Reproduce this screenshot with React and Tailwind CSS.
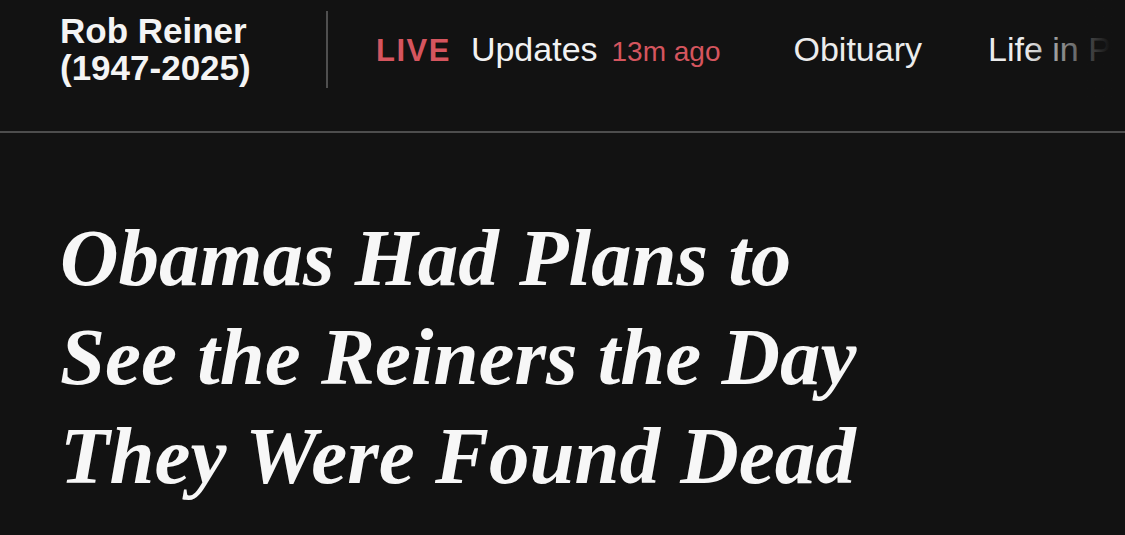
import React from "react";

const sans = { fontFamily: '"Liberation Sans", Arial, sans-serif' };

function TopBar() {
  return (
    <div className="relative h-[133px] overflow-hidden border-b-2 border-[#4d4d4d]">
      <div className="flex h-[98px] items-center pl-[60px]">
        <div
          className="w-[266px] shrink-0 text-[35px] font-bold leading-[37px] text-[#f4f4f4]"
          style={sans}
        >
          <div>Rob Reiner</div>
          <div>(1947-2025)</div>
        </div>
        <div className="h-[77px] w-[2px] shrink-0 bg-[#4f4f4f]" />
        <div className="ml-[48px] flex shrink-0 items-baseline whitespace-nowrap" style={sans}>
          <span className="text-[31px] font-bold leading-none tracking-[1.5px] text-[#d5555e]">
            LIVE
          </span>
          <span className="ml-[20px] text-[34px] leading-none text-[#f2f2f2]">Updates</span>
          <span className="ml-[14px] text-[28px] leading-none text-[#d5555e]">13m ago</span>
          <span className="ml-[73px] text-[34px] leading-none text-[#ececec]">Obituary</span>
          <span className="ml-[66px] text-[34px] leading-none text-[#ececec]">
            Life in Pictures
          </span>
        </div>
      </div>
      <div className="pointer-events-none absolute right-0 top-0 h-[98px] w-[100px] bg-gradient-to-l from-[#121212] from-15% to-transparent" />
    </div>
  );
}

export default function App() {
  return (
    <div className="h-[535px] w-[1125px] overflow-hidden bg-[#121212]">
      <TopBar />
      <h1
        className="pl-[60px] pt-[76px] text-[81px] font-bold italic leading-[99px] text-[#f7f7f7]"
        style={{ fontFamily: '"Liberation Serif", "Times New Roman", serif' }}
      >
        <span className="block">Obamas Had Plans to</span>
        <span className="block">See the Reiners the Day</span>
        <span className="block">They Were Found Dead</span>
      </h1>
    </div>
  );
}
